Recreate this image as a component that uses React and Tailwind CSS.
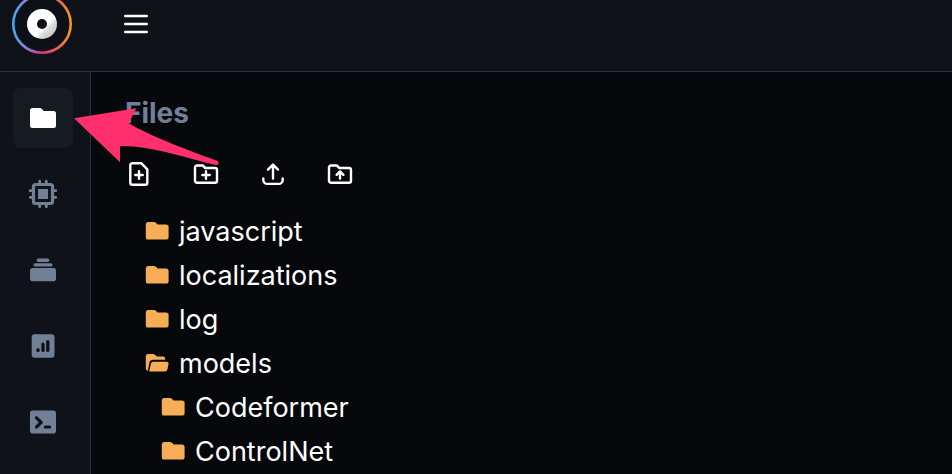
import React, { useState } from "react";
import clsx from "clsx";

const FOLDER = "M3 2h6.200c.7 0 1.200.2 1.700.7L12.600 4.400H21A2.600 2.600 0 0 1 23.600 7v10A2.600 2.600 0 0 1 21 19.600H3.400A2.600 2.600 0 0 1 .8 17V4.400A2.400 2.400 0 0 1 3 2Z";

const NAV = [
  {
    name: "Files",
    icon: <path d="M5.500 6h7.300c.8 0 1.400.3 1.900.8L16.800 9h9.700A2.500 2.500 0 0 1 29 11.500v12a2.500 2.500 0 0 1-2.500 2.500h-21A2.500 2.500 0 0 1 3 23.500v-15A2.500 2.500 0 0 1 5.500 6Z" />,
  },
  {
    name: "Hardware",
    icon: (
      <>
        <rect x="6.500" y="6.500" width="19" height="19" rx="2" fill="none" stroke="currentColor" strokeWidth="3.200" />
        <rect x="11" y="11" width="10" height="10" />
        <path d="M12.700 6V3.200M19.300 6V3.200M12.700 26v2.800M19.300 26v2.800M6 12.700H3.200M6 19.300H3.200M26 12.700h2.800M26 19.300h2.800" stroke="currentColor" strokeWidth="2.800" strokeLinecap="round" />
      </>
    ),
  },
  {
    name: "Packages",
    icon: (
      <>
        <rect x="9.700" y="4.500" width="12.600" height="3.400" rx="1.700" />
        <rect x="6.500" y="9.200" width="19" height="3.400" rx="1.700" />
        <rect x="3" y="14" width="26" height="13.200" rx="2.800" />
      </>
    ),
  },
  {
    name: "Metrics",
    icon: (
      <>
        <rect x="4.700" y="4.300" width="22.800" height="23.500" rx="3" />
        <path d="M11 19.600v.8M16 14.200v6.200M20.800 11.600v8.800" stroke="#0f1219" strokeWidth="3.300" strokeLinecap="round" />
      </>
    ),
  },
  {
    name: "Terminal",
    icon: (
      <>
        <rect x="3" y="4.500" width="26" height="23" rx="2.800" />
        <path d="M9.500 11.800l4.700 4.600-4.700 4.600M18.300 21h4.300" fill="none" stroke="#0f1219" strokeWidth="3.200" strokeLinecap="round" strokeLinejoin="round" />
      </>
    ),
  },
];

const FOLDER_OUTLINE = "M5 5.500h5.700L13.400 8H23a2 2 0 0 1 2 2v10.700a2 2 0 0 1-2 2H5a2 2 0 0 1-2-2V7.500a2 2 0 0 1 2-2Z";

const ACTIONS = [
  { name: "New file", d: "M7.300 3.200h8.900L22.300 9.300v13.400a2 2 0 0 1-2 2H7.300a2 2 0 0 1-2-2V5.200a2 2 0 0 1 2-2ZM14 11.300v7.400M10.300 15h7.400" },
  { name: "New folder", d: FOLDER_OUTLINE + "M14 11.300v7.400M10.300 15h7.400" },
  { name: "Upload file", d: "M14 18.500V4.800M9 9.600l5-5 5 5M4.300 18.500v1.400a4 4 0 0 0 4 4h11.400a4 4 0 0 0 4-4v-1.400" },
  { name: "Upload folder", d: FOLDER_OUTLINE + "M14 18.600v-6.900M10.600 14.800l3.400-3.400 3.400 3.400" },
];

const TREE = [
  { name: "javascript" },
  { name: "localizations" },
  { name: "log" },
  { name: "models", open: true },
  { name: "Codeformer", child: true },
  { name: "ControlNet", child: true },
];

function Logo() {
  return (
    <svg viewBox="0 0 60 60" className="h-[60px] w-[60px] shrink-0" aria-label="Logo">
      <defs>
        <linearGradient id="ring" x1="0" x2="1" y1="0" y2="0">
          <stop offset="0" stopColor="#3fa9f0" />
          <stop offset="0.22" stopColor="#8a86cf" />
          <stop offset="0.5" stopColor="#dc2f83" />
          <stop offset="0.78" stopColor="#ee6050" />
          <stop offset="1" stopColor="#f8981d" />
        </linearGradient>
        <linearGradient id="disc" x1="0" x2="1" y1="0" y2="1">
          <stop offset="0.58" stopColor="#ffffff" />
          <stop offset="0.68" stopColor="#dedede" />
          <stop offset="0.9" stopColor="#c4c4c4" />
        </linearGradient>
      </defs>
      <circle cx="30" cy="30" r="28.700" fill="#0d1016" stroke="url(#ring)" strokeWidth="2.600" />
      <circle cx="30" cy="30" r="15" fill="url(#disc)" />
      <circle cx="30" cy="30" r="5" fill="#0d1016" />
    </svg>
  );
}

function FolderIcon({ open }) {
  return (
    <svg viewBox="0 0 24 24" className="h-6 w-6 shrink-0 fill-[#f6ad55]">
      {open ? (
        <>
          <path d="M2.800 2h5.400c.7 0 1.200.2 1.700.7l1.800 1.700h6.100A2.300 2.300 0 0 1 20.200 6.700v1.100H8.200A4 4 0 0 0 4.300 11L2.800 18.900A2.300 2.300 0 0 1 .8 16.600V4.200A2.200 2.200 0 0 1 2.800 2Z" />
          <path d="M8.500 9.700h13a2 2 0 0 1 2 2.300l-1.100 5.600a2.500 2.500 0 0 1-2.400 2H4.200l1.700-7.800a2.600 2.600 0 0 1 2.600-2.100Z" />
        </>
      ) : (
        <path d={FOLDER} />
      )}
    </svg>
  );
}

export default function App() {
  const [active, setActive] = useState("Files");

  return (
    <div className="relative flex min-h-screen flex-col overflow-hidden bg-[#07080c] font-['Inter',sans-serif] text-white">
      <header className="h-[72px] border-b border-[#2d303b] bg-[#0f1219] pl-3">
        <div className="flex h-12 items-center gap-[52px]">
          <Logo />
          <button aria-label="Menu" className="cursor-pointer">
            <svg viewBox="0 0 24 24" className="h-6 w-6" stroke="currentColor" strokeWidth="2.400" strokeLinecap="round">
              <path d="M1.200 4h21.600M1.200 12h21.600M1.200 20h21.600" />
            </svg>
          </button>
        </div>
      </header>

      <div className="flex flex-1">
        {/* Sidebar */}
        <nav className="flex w-[91px] shrink-0 flex-col gap-4 border-r border-[#2d303b] bg-[#0f1219] pt-4 pl-[13px]">
          {NAV.map((item) => (
            <button
              key={item.name}
              aria-label={item.name}
              onClick={() => setActive(item.name)}
              className={clsx(
                "flex h-[60px] w-[60px] cursor-pointer items-center justify-center rounded-lg",
                active === item.name ? "bg-[#161a21] text-white" : "text-[#718096]"
              )}
            >
              <svg viewBox="0 0 32 32" className="h-8 w-8" fill="currentColor">{item.icon}</svg>
            </button>
          ))}
        </nav>

        <main className="flex-1 pt-[21px] pl-[34px]">
          <h1 className="text-[28px] leading-10 font-bold text-[#718096]">Files</h1>
          <div className="mt-[27px] flex gap-[39px]">
            {ACTIONS.map((action) => (
              <button key={action.name} aria-label={action.name} className="cursor-pointer">
                <svg viewBox="0 0 28 28" className="h-7 w-7" fill="none" stroke="currentColor" strokeWidth="2.400" strokeLinecap="round" strokeLinejoin="round">
                  <path d={action.d} />
                </svg>
              </button>
            ))}
          </div>

          {/* File tree */}
          <ul className="mt-[22px] pl-5">
            {TREE.map((node) => (
              <li key={node.name} className={node.child ? "pl-4" : ""}>
                <button className="flex h-11 cursor-pointer items-center gap-2.5 text-[27px] leading-10">
                  <FolderIcon open={node.open} />
                  <span>{node.name}</span>
                </button>
              </li>
            ))}
          </ul>
        </main>
      </div>

      {/* Arrow pointing at the files tab */}
      <svg viewBox="0 0 146 60" className="pointer-events-none absolute top-[107px] left-[74px] h-[60px] w-[146px] fill-[#ff2e6c]">
        <path d="M0 11.300L62.500 1.300 54.500 16C76 29 112 42.500 143 53.700A2.200 2.200 0 0 1 142 58C112 51 77 38.500 46 39V55.300Z" />
      </svg>
    </div>
  );
}
